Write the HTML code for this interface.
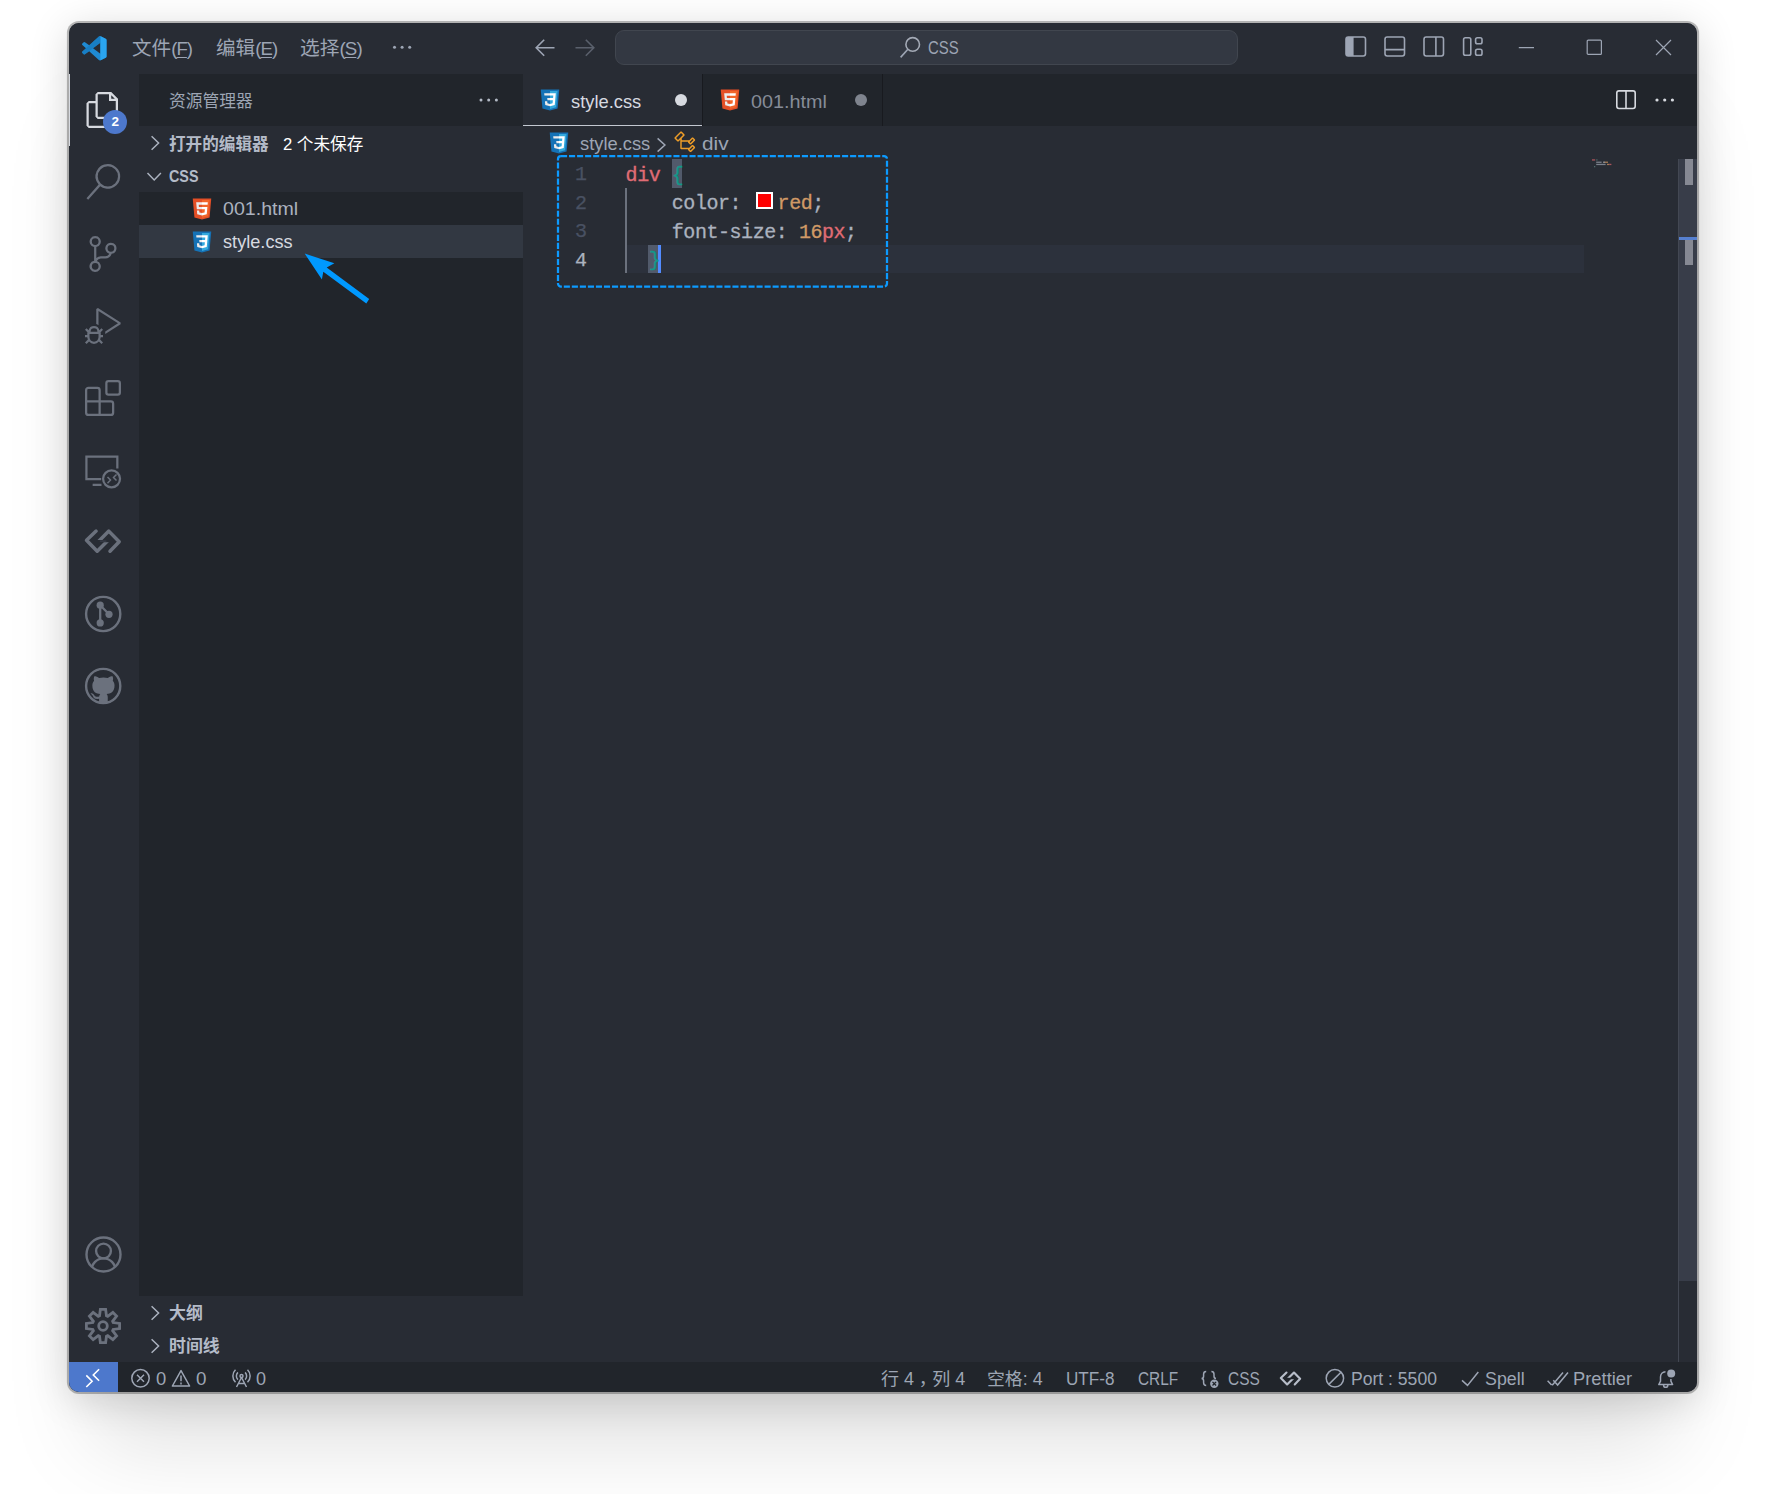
<!DOCTYPE html>
<html lang="zh-CN"><head><meta charset="utf-8"><title>style.css - CSS - Visual Studio Code</title>
<style>
html,body{margin:0;padding:0;background:#fff}
body{width:1768px;height:1494px;position:relative;overflow:hidden;font-family:"Liberation Sans","Noto Sans CJK SC",sans-serif}
.shadow{position:absolute;left:69px;top:23.2px;width:1628px;height:1368.5px;border-radius:10px;
 box-shadow:0 0 0 2.1px rgba(0,0,0,.26),0 6px 40px rgba(0,0,0,.16),0 76px 84px -25px rgba(0,0,0,.125)}
.win{position:absolute;left:69px;top:23.2px;width:1628px;height:1368.5px;border-radius:10px;overflow:hidden;background:#282c34}
.stage{position:absolute;left:-69px;top:-23.2px;width:1768px;height:1494px}
.frame{display:none}
.a{position:absolute}
.t{position:absolute;white-space:nowrap;transform-origin:0 50%;display:block}
.la{font-size:18.5px;letter-spacing:-.9px}
.t u{text-decoration-thickness:1px;text-underline-offset:2px}
svg{position:absolute;overflow:visible}
.code{position:absolute;white-space:pre;font-family:"Liberation Mono","DejaVu Sans Mono",monospace;font-size:20px;letter-spacing:-.45px;height:28.5px;line-height:28.5px;margin-top:2.6px;-webkit-text-stroke:.3px;color:#abb2bf}
.ln{position:absolute;font-family:"Liberation Mono","DejaVu Sans Mono",monospace;font-size:20px;letter-spacing:-.45px;height:28.5px;line-height:28.5px;margin-top:2.4px;-webkit-text-stroke:.25px;width:40px;text-align:right;color:#495162}
</style></head>
<body>
<div class="shadow"></div>

<div class="win"><div class="stage">
<!-- ===== panels / backgrounds ===== -->
<div class="a" style="left:67px;top:21px;width:1632px;height:53px;background:#282c34"></div>
<div class="a" style="left:67px;top:74px;width:72px;height:1288px;background:#282c34"></div>
<div class="a" style="left:139px;top:74px;width:384px;height:1288px;background:#21252b"></div>
<div class="a" style="left:523px;top:74px;width:1176px;height:52px;background:#21252b"></div>
<div class="a" style="left:523px;top:126px;width:1176px;height:1236px;background:#282c34"></div>
<div class="a" style="left:67px;top:1362px;width:1632px;height:33px;background:#21252b"></div>
<!-- ===== title bar ===== -->
<svg style="left:82px;top:35.5px" width="24.5" height="24.5" viewBox="0 0 24 24">
 <path fill="#1f8ad2" d="M23.15 2.587L18.21.21a1.494 1.494 0 0 0-1.705.29l-9.46 8.63-4.12-3.128a.999.999 0 0 0-1.276.057L.327 7.261A1 1 0 0 0 .326 8.74L3.899 12 .326 15.26a1 1 0 0 0 .001 1.479L1.65 17.94a.999.999 0 0 0 1.276.057l4.12-3.128 9.46 8.63a1.492 1.492 0 0 0 1.704.29l4.942-2.377A1.5 1.5 0 0 0 24 20.06V3.939a1.5 1.5 0 0 0-.85-1.352zm-5.146 14.861L10.826 12l7.178-5.448v10.896z"/>
 <path fill="#2aa5f0" d="M18 .3c.07-.03.14-.06.21-.09l4.94 2.377A1.5 1.5 0 0 1 24 3.939V20.06a1.5 1.5 0 0 1-.848 1.352L18.21 23.79c-.07.03-.14.05-.21.07V.3z"/>
 <path fill="#1274b8" d="M1.65 17.94a.999.999 0 0 0 1.276.057L18 6.55V.3a1.49 1.49 0 0 0-1.495.2L.326 15.26a1 1 0 0 0 .001 1.479L1.65 17.94z" opacity=".55"/>
</svg>
<svg style="left:390px;top:40px" width="24" height="14"><g fill="#9da5b4"><circle cx="4.5" cy="7.2" r="1.5"/><circle cx="12.1" cy="7.2" r="1.5"/><circle cx="19.7" cy="7.2" r="1.5"/></g></svg>
<!-- nav arrows -->
<svg style="left:534px;top:37px" width="22" height="22" viewBox="0 0 22 22"><path d="M20.5 10.8H2.6M10.2 2.8L2.2 10.8l8 8" fill="none" stroke="#9da5b4" stroke-width="1.6"/></svg>
<svg style="left:573.5px;top:37px" width="22" height="22" viewBox="0 0 22 22"><path d="M1.5 10.8H19.4M11.8 2.8l8 8-8 8" fill="none" stroke="#5a606c" stroke-width="1.6"/></svg>
<!-- command center -->
<div class="a" style="left:615px;top:30.1px;width:623px;height:34.8px;box-sizing:border-box;border:1px solid #41464f;border-radius:9px;background:#333842"></div>
<svg style="left:899px;top:37px" width="22" height="22" viewBox="0 0 22 22"><circle cx="13.7" cy="7.4" r="6.8" fill="none" stroke="#a3a9b5" stroke-width="1.6"/><path d="M8.9 12.2L1.6 20.4" stroke="#9da5b4" stroke-width="1.6" fill="none"/></svg>
<!-- layout controls -->
<svg style="left:1344.5px;top:35.9px" width="22" height="22" viewBox="0 0 22 22"><rect x="1" y="1" width="19.5" height="19" rx="2.2" fill="none" stroke="#9da5b4" stroke-width="1.6"/><path d="M1 3.2a2.2 2.2 0 0 1 2.2-2.2H8.6v19H3.2A2.2 2.2 0 0 1 1 17.8z" fill="#9da5b4"/></svg>
<svg style="left:1383.5px;top:35.9px" width="22" height="22" viewBox="0 0 22 22"><rect x="1" y="1" width="19.5" height="19" rx="2.2" fill="none" stroke="#9da5b4" stroke-width="1.6"/><path d="M1 13.6H20.5" stroke="#9da5b4" stroke-width="1.6"/></svg>
<svg style="left:1422.5px;top:35.9px" width="22" height="22" viewBox="0 0 22 22"><rect x="1" y="1" width="19.5" height="19" rx="2.2" fill="none" stroke="#9da5b4" stroke-width="1.6"/><path d="M12.9 1V20" stroke="#9da5b4" stroke-width="1.6"/></svg>
<svg style="left:1462px;top:35.9px" width="22" height="22" viewBox="0 0 22 22"><g fill="none" stroke="#9da5b4" stroke-width="1.6"><rect x="1.6" y="1.8" width="7.2" height="17.4" rx="1.8"/><rect x="13.6" y="1.8" width="6.4" height="6" rx="1.8"/><rect x="13.6" y="13.2" width="6.4" height="6" rx="1.8"/></g></svg>
<!-- window controls -->
<svg style="left:1518px;top:40px" width="18" height="16"><path d="M0.8 7.6H16" stroke="#9da5b4" stroke-width="1.2"/></svg>
<svg style="left:1586px;top:38.8px" width="18" height="18"><rect x="1.2" y="1.2" width="14.2" height="14.2" rx="1" fill="none" stroke="#9da5b4" stroke-width="1.2"/></svg>
<svg style="left:1655px;top:38.9px" width="18" height="18"><path d="M1 1L16 16M16 1L1 16" stroke="#9da5b4" stroke-width="1.2"/></svg>
<!-- ===== activity bar ===== -->
<div class="a" style="left:67px;top:74px;width:3.3px;height:72px;background:#d7dae0"></div>
<svg style="left:85.2px;top:91.7px" width="36" height="36" viewBox="0 0 24 24"><path fill="#d7dae0" d="M17.5 0h-9L7 1.5V6H2.5L1 7.5v15.07L2.5 24h12.07L16 22.57V18h4.7l1.3-1.43V4.5L17.5 0zm0 2.12l2.38 2.38H17.5V2.12zm-3 20.38h-12v-15H7v9.07L8.5 18h6v4.5zm6-6h-12v-15H16V6h4.5v10.5z"/></svg>
<div class="a" style="left:103.2px;top:109.8px;width:24px;height:24px;border-radius:12px;background:#4d78cc"></div>
<span class="t" id="badge" style="left:103.2px;top:109.8px;width:24px;height:24px;line-height:24.5px;text-align:center;font-size:13.5px;font-weight:700;color:#fff">2</span>
<svg style="left:85.2px;top:163.7px" width="36" height="36" viewBox="0 0 24 24"><path fill="#6b717d" d="M15.25 0a8.25 8.25 0 0 0-6.18 13.72L1 22.88l1.12 1 8.05-9.12A8.251 8.251 0 1 0 15.25.01V0zm0 15a6.75 6.75 0 1 1 0-13.5 6.75 6.75 0 0 1 0 13.5z"/></svg>
<svg style="left:85.2px;top:235.7px" width="36" height="36" viewBox="0 0 24 24"><path fill="#6b717d" d="M21.007 8.222A3.738 3.738 0 0 0 15.045 5.2a3.737 3.737 0 0 0 1.156 6.583 2.988 2.988 0 0 1-2.668 1.67h-2.99a4.456 4.456 0 0 0-2.989 1.165V7.4a3.737 3.737 0 1 0-1.494 0v9.117a3.776 3.776 0 1 0 1.816.099 2.99 2.99 0 0 1 2.668-1.667h2.99a4.484 4.484 0 0 0 4.223-3.039 3.736 3.736 0 0 0 3.25-3.687zM4.565 3.738a2.242 2.242 0 1 1 4.484 0 2.242 2.242 0 0 1-4.484 0zm4.484 16.441a2.242 2.242 0 1 1-4.484 0 2.242 2.242 0 0 1 4.484 0zm8.221-9.715a2.242 2.242 0 1 1 0-4.485 2.242 2.242 0 0 1 0 4.485z"/></svg>
<svg style="left:85.2px;top:307.7px" width="36" height="36" viewBox="0 0 24 24"><path fill="#6b717d" d="M10.94 13.5l-1.32 1.32a3.73 3.73 0 0 0-7.24 0L1.06 13.5 0 14.56l1.72 1.72-.22.22V18H0v1.5h1.5v.08c.077.489.214.966.41 1.42L0 22.94 1.06 24l1.65-1.65A4.308 4.308 0 0 0 6 24a4.31 4.31 0 0 0 3.29-1.65L10.94 24 12 22.94 10.09 21c.198-.464.336-.951.41-1.45v-.1H12V18h-1.5v-1.5l-.22-.22L12 14.56l-1.06-1.06zM6 13.5a2.25 2.25 0 0 1 2.25 2.25h-4.5A2.25 2.25 0 0 1 6 13.5zm3 6a3.33 3.33 0 0 1-3 3 3.33 3.33 0 0 1-3-3v-2.25h6v2.25zm14.76-9.9v1.26L13.5 17.37V15.6l8.5-5.37L9 2v9.46a5.07 5.07 0 0 0-1.5-.72V.63L8.64 0l15.12 9.6z"/></svg>
<svg style="left:85.2px;top:379.7px" width="36" height="36" viewBox="0 0 24 24"><g fill="none" stroke="#6b717d" stroke-width="1.5" stroke-linejoin="round"><rect x="14.25" y=".75" width="9" height="9" rx="1.4"/><path d="M2.25 5.25H8.25a1.5 1.5 0 0 1 1.5 1.5V14.25H17.25a1.5 1.5 0 0 1 1.5 1.5V21.75a1.5 1.5 0 0 1-1.5 1.5H2.25a1.5 1.5 0 0 1-1.5-1.5V6.75a1.5 1.5 0 0 1 1.5-1.5zM.75 14.25H9.75V23.25"/></g></svg>
<svg style="left:85.2px;top:451.7px" width="36" height="36" viewBox="0 0 24 24"><g fill="none" stroke="#6b717d"><path stroke-width="1.5" d="M21.55 11V3.15H.95V18.15H10.8M5.1 21.9H11"/><circle cx="17.7" cy="17.9" r="5.65" stroke-width="1.5"/><path stroke-width="1" d="M15 16.6l2 2.1-2 2.1M21 15l-2 2 2 2"/></g></svg>
<svg style="left:0;top:0" width="1768" height="700"><defs><clipPath id="cl1"><path d="M80 520H98.6V542.3H125V560H80z"/></clipPath><clipPath id="cl2"><path d="M125 560H107.6V539.9H80V520H125z"/></clipPath></defs>
<g fill="none" stroke="#6b717d" stroke-width="3.5" stroke-linecap="round" stroke-linejoin="round"><path clip-path="url(#cl1)" d="M96.1 531.1L86.5 540.3 97.2 551.2 109 539.4"/><path clip-path="url(#cl2)" d="M110 551.2L119.2 541.8 108.8 531.1 97 542.9"/></g><rect x="99.8" y="540.5" width="6.6" height="1.3" fill="#3a3f4a"/></svg>
<svg style="left:0;top:0" width="200" height="800"><g stroke="#6b717d" fill="none"><circle cx="103.2" cy="614.0" r="17.1" stroke-width="2.4"/><path stroke-width="2.3" d="M100.2 605.2V622.9M100.2 605.2L109 614.3"/></g><g fill="#6b717d"><circle cx="100.2" cy="605.2" r="3.6"/><circle cx="109" cy="614.3" r="3.6"/><circle cx="100.2" cy="622.9" r="3.6"/></g></svg>
<svg style="left:85.8px;top:668.6px" width="34.8" height="34.8" viewBox="0 0 16 16"><path fill="#6b717d" fill-rule="evenodd" d="M8 .2a7.8 7.8 0 1 0 0 15.6A7.8 7.8 0 1 0 8 .2zM8 0C3.58 0 0 3.58 0 8c0 3.54 2.29 6.53 5.47 7.59.4.07.55-.17.55-.38 0-.19-.01-.82-.01-1.49-2.01.37-2.53-.49-2.69-.94-.09-.23-.48-.94-.82-1.13-.28-.15-.68-.52-.01-.53.63-.01 1.08.58 1.23.82.72 1.21 1.87.87 2.33.66.07-.52.28-.87.51-1.07-1.78-.2-3.64-.89-3.64-3.95 0-.87.31-1.59.82-2.15-.08-.2-.36-1.02.08-2.12 0 0 .67-.21 2.2.82.64-.18 1.32-.27 2-.27.68 0 1.36.09 2 .27 1.53-1.04 2.2-.82 2.2-.82.44 1.1.16 1.92.08 2.12.51.56.82 1.27.82 2.15 0 3.07-1.87 3.75-3.65 3.95.29.25.54.73.54 1.48 0 1.07-.01 1.93-.01 2.2 0 .21.15.46.55.38A8.013 8.013 0 0 0 16 8c0-4.42-3.58-8-8-8z"/></svg>
<svg style="left:0;top:0" width="200" height="800"><circle cx="103.2" cy="686.0" r="17.1" fill="none" stroke="#6b717d" stroke-width="2.4"/></svg>
<svg style="left:84.6px;top:1235.5px" width="37" height="37" viewBox="0 0 37 37"><defs><clipPath id="acc"><circle cx="18.5" cy="18.5" r="17"/></clipPath></defs><g fill="none" stroke="#6b717d" stroke-width="2.4"><circle cx="18.5" cy="18.5" r="17"/><circle cx="18.5" cy="15" r="7.4"/><circle clip-path="url(#acc)" cx="18.5" cy="34.4" r="12"/></g></svg>
<svg style="left:84.9px;top:1308px" width="36" height="36" viewBox="0 0 36 36"><g fill="none" stroke="#6b717d" stroke-width="2.8" stroke-linejoin="miter"><path d="M14.52 7.88 L15.37 1.41 L20.63 1.41 L21.48 7.88 L22.69 8.38 L27.87 4.41 L31.59 8.13 L27.62 13.31 L28.12 14.52 L34.59 15.37 L34.59 20.63 L28.12 21.48 L27.62 22.69 L31.59 27.87 L27.87 31.59 L22.69 27.62 L21.48 28.12 L20.63 34.59 L15.37 34.59 L14.52 28.12 L13.31 27.62 L8.13 31.59 L4.41 27.87 L8.38 22.69 L7.88 21.48 L1.41 20.63 L1.41 15.37 L7.88 14.52 L8.38 13.31 L4.41 8.13 L8.13 4.41 L13.31 8.38Z"/><circle cx="18" cy="18" r="4.3"/></g></svg>
<!-- ===== sidebar ===== -->
<div class="a" style="left:139px;top:126px;width:384px;height:66px;background:#282c34"></div>
<div class="a" style="left:139px;top:225px;width:384px;height:33px;background:#323842"></div>
<div class="a" style="left:139px;top:1296px;width:384px;height:66px;background:#282c34"></div>
<svg style="left:476px;top:93px" width="26" height="14"><g fill="#b3bac6"><circle cx="5" cy="7" r="1.5"/><circle cx="12.7" cy="7" r="1.5"/><circle cx="20.4" cy="7" r="1.5"/></g></svg>
<svg style="left:149.6px;top:134px" width="12" height="18"><path d="M1.6 2.2L8.6 9 1.6 15.8" fill="none" stroke="#abb2bf" stroke-width="1.5"/></svg>
<svg style="left:146.3px;top:170.5px" width="18" height="12"><path d="M1.5 2L8.2 9 14.9 2" fill="none" stroke="#abb2bf" stroke-width="1.5"/></svg>
<svg style="left:149.6px;top:1304px" width="12" height="18"><path d="M1.6 2.2L8.6 9 1.6 15.8" fill="none" stroke="#abb2bf" stroke-width="1.5"/></svg>
<svg style="left:149.6px;top:1337px" width="12" height="18"><path d="M1.6 2.2L8.6 9 1.6 15.8" fill="none" stroke="#abb2bf" stroke-width="1.5"/></svg>
<svg style="left:190.2px;top:196.6px" width="24" height="24" viewBox="0 0 32 32"><polygon points="5.902 27.201 3.655 2 28.345 2 26.095 27.197 15.985 30 5.902 27.201" fill="#e44f26"/><polygon points="16 27.858 24.17 25.593 26.092 4.061 16 4.061 16 27.858" fill="#f1662a"/><polygon points="16 13.407 11.91 13.407 11.628 10.242 16 10.242 16 7.151 15.989 7.151 8.25 7.151 8.324 7.981 9.083 16.498 16 16.498 16 13.407" fill="#ebebeb"/><polygon points="16 21.434 15.986 21.438 12.544 20.509 12.324 18.044 10.651 18.044 9.221 18.044 9.654 22.896 15.986 24.654 16 24.65 16 21.434" fill="#ebebeb"/><polygon points="15.989 13.407 15.989 16.498 19.795 16.498 19.437 20.507 15.989 21.437 15.989 24.653 22.326 22.896 22.372 22.374 23.098 14.237 23.174 13.407 22.341 13.407 15.989 13.407" fill="#fff"/><polygon points="15.989 7.151 15.989 9.071 15.989 10.235 15.989 10.242 23.445 10.242 23.445 10.242 23.455 10.242 23.517 9.548 23.658 7.981 23.732 7.151 15.989 7.151" fill="#fff"/></svg>
<svg style="left:190.2px;top:229.6px" width="24" height="24" viewBox="0 0 32 32"><polygon points="5.902 27.201 3.656 2 28.344 2 26.095 27.197 15.985 30 5.902 27.201" fill="#1572b6"/><polygon points="16 27.858 24.17 25.593 26.092 4.061 16 4.061 16 27.858" fill="#33a9dc"/><polygon points="16 13.191 20.09 13.191 20.372 10.026 16 10.026 16 6.935 16.011 6.935 23.75 6.935 23.676 7.764 22.917 16.282 16 16.282 16 13.191" fill="#fff"/><polygon points="16.019 21.218 16.005 21.222 12.563 20.292 12.343 17.827 10.67 17.827 9.24 17.827 9.673 22.68 16.004 24.438 16.019 24.434 16.019 21.218" fill="#ebebeb"/><polygon points="19.827 16.151 19.455 20.29 16.008 21.22 16.008 24.436 22.344 22.68 22.391 22.158 22.928 16.151 19.827 16.151" fill="#fff"/><polygon points="16.011 6.935 16.011 8.855 16.011 10.018 16.011 10.026 8.555 10.026 8.555 10.026 8.545 10.026 8.483 9.331 8.342 7.764 8.268 6.935 16.011 6.935" fill="#ebebeb"/><polygon points="16 13.191 16 15.111 16 16.274 16 16.282 12.611 16.282 12.611 16.282 12.601 16.282 12.539 15.587 12.399 14.02 12.325 13.191 16 13.191" fill="#ebebeb"/></svg>
<!-- ===== editor: tabs ===== -->
<div class="a" style="left:523px;top:74px;width:179px;height:52px;background:#282c34"></div>
<div class="a" style="left:523px;top:124.9px;width:179px;height:1.3px;background:#c3c8d0"></div>
<div class="a" style="left:702px;top:74px;width:1px;height:52px;background:#181a1f"></div>
<div class="a" style="left:882px;top:74px;width:1px;height:52px;background:#181a1f"></div>
<svg style="left:538px;top:87.6px" width="24" height="24" viewBox="0 0 32 32"><polygon points="5.902 27.201 3.656 2 28.344 2 26.095 27.197 15.985 30 5.902 27.201" fill="#1572b6"/><polygon points="16 27.858 24.17 25.593 26.092 4.061 16 4.061 16 27.858" fill="#33a9dc"/><polygon points="16 13.191 20.09 13.191 20.372 10.026 16 10.026 16 6.935 16.011 6.935 23.75 6.935 23.676 7.764 22.917 16.282 16 16.282 16 13.191" fill="#fff"/><polygon points="16.019 21.218 16.005 21.222 12.563 20.292 12.343 17.827 10.67 17.827 9.24 17.827 9.673 22.68 16.004 24.438 16.019 24.434 16.019 21.218" fill="#ebebeb"/><polygon points="19.827 16.151 19.455 20.29 16.008 21.22 16.008 24.436 22.344 22.68 22.391 22.158 22.928 16.151 19.827 16.151" fill="#fff"/><polygon points="16.011 6.935 16.011 8.855 16.011 10.018 16.011 10.026 8.555 10.026 8.555 10.026 8.545 10.026 8.483 9.331 8.342 7.764 8.268 6.935 16.011 6.935" fill="#ebebeb"/><polygon points="16 13.191 16 15.111 16 16.274 16 16.282 12.611 16.282 12.611 16.282 12.601 16.282 12.539 15.587 12.399 14.02 12.325 13.191 16 13.191" fill="#ebebeb"/></svg>
<svg style="left:717.9px;top:87.6px" width="24" height="24" viewBox="0 0 32 32"><polygon points="5.902 27.201 3.655 2 28.345 2 26.095 27.197 15.985 30 5.902 27.201" fill="#e44f26"/><polygon points="16 27.858 24.17 25.593 26.092 4.061 16 4.061 16 27.858" fill="#f1662a"/><polygon points="16 13.407 11.91 13.407 11.628 10.242 16 10.242 16 7.151 15.989 7.151 8.25 7.151 8.324 7.981 9.083 16.498 16 16.498 16 13.407" fill="#ebebeb"/><polygon points="16 21.434 15.986 21.438 12.544 20.509 12.324 18.044 10.651 18.044 9.221 18.044 9.654 22.896 15.986 24.654 16 24.65 16 21.434" fill="#ebebeb"/><polygon points="15.989 13.407 15.989 16.498 19.795 16.498 19.437 20.507 15.989 21.437 15.989 24.653 22.326 22.896 22.372 22.374 23.098 14.237 23.174 13.407 22.341 13.407 15.989 13.407" fill="#fff"/><polygon points="15.989 7.151 15.989 9.071 15.989 10.235 15.989 10.242 23.445 10.242 23.445 10.242 23.455 10.242 23.517 9.548 23.658 7.981 23.732 7.151 15.989 7.151" fill="#fff"/></svg>
<div class="a" style="left:675px;top:94.2px;width:12px;height:12px;border-radius:6px;background:#d7dae0"></div>
<div class="a" style="left:855px;top:94.2px;width:12px;height:12px;border-radius:6px;background:#7f848e"></div>
<svg style="left:1615px;top:88.5px" width="22" height="22"><rect x="1.8" y="1.9" width="18.4" height="17.6" rx="2.2" fill="none" stroke="#d7dae0" stroke-width="1.6"/><path d="M11 1.9V19.5" stroke="#d7dae0" stroke-width="1.6"/></svg>
<svg style="left:1652px;top:93px" width="26" height="14"><g fill="#d7dae0"><circle cx="5" cy="7" r="1.6"/><circle cx="12.7" cy="7" r="1.6"/><circle cx="20.4" cy="7" r="1.6"/></g></svg>
<!-- ===== breadcrumbs ===== -->
<svg style="left:547.1px;top:130.6px" width="24" height="24" viewBox="0 0 32 32"><polygon points="5.902 27.201 3.656 2 28.344 2 26.095 27.197 15.985 30 5.902 27.201" fill="#1572b6"/><polygon points="16 27.858 24.17 25.593 26.092 4.061 16 4.061 16 27.858" fill="#33a9dc"/><polygon points="16 13.191 20.09 13.191 20.372 10.026 16 10.026 16 6.935 16.011 6.935 23.75 6.935 23.676 7.764 22.917 16.282 16 16.282 16 13.191" fill="#fff"/><polygon points="16.019 21.218 16.005 21.222 12.563 20.292 12.343 17.827 10.67 17.827 9.24 17.827 9.673 22.68 16.004 24.438 16.019 24.434 16.019 21.218" fill="#ebebeb"/><polygon points="19.827 16.151 19.455 20.29 16.008 21.22 16.008 24.436 22.344 22.68 22.391 22.158 22.928 16.151 19.827 16.151" fill="#fff"/><polygon points="16.011 6.935 16.011 8.855 16.011 10.018 16.011 10.026 8.555 10.026 8.555 10.026 8.545 10.026 8.483 9.331 8.342 7.764 8.268 6.935 16.011 6.935" fill="#ebebeb"/><polygon points="16 13.191 16 15.111 16 16.274 16 16.282 12.611 16.282 12.611 16.282 12.601 16.282 12.539 15.587 12.399 14.02 12.325 13.191 16 13.191" fill="#ebebeb"/></svg>
<svg style="left:656.4px;top:135.6px" width="12" height="18"><path d="M1.6 2.4L8.9 9 1.6 15.6" fill="none" stroke="#9da5b4" stroke-width="1.5"/></svg>
<svg style="left:673.2px;top:129.8px" width="24" height="24" viewBox="0 0 16 16"><path fill="#ee9d28" d="M11.34 9.71h.71l2.67-2.67v-.71L13.38 5h-.7l-1.82 1.81h-5V5.56l1.86-1.85V3l-2-2H5L1 5v.71l2 2h.71l1.14-1.15v5.79l.5.5H10v.52l1.33 1.34h.71l2.67-2.67v-.71L13.37 10h-.7l-1.86 1.85h-5v-4H10v.48l1.34 1.38zm1.69-3.65l.63.63-2 2-.63-.63 2-2zm0 5l.63.63-2 2-.63-.63 2-2zM3.35 6.65l-1.29-1.3 3.29-3.29 1.3 1.29-3.3 3.3z"/></svg>
<!-- ===== code ===== -->
<div class="a" style="left:627px;top:244.5px;width:957px;height:28.5px;background:#2c313c"></div>
<div class="a" style="left:672px;top:159px;width:10px;height:28.7px;background:#515a6b"></div>
<div class="a" style="left:648px;top:244.7px;width:10px;height:28.3px;background:#515a6b"></div>
<div class="a" style="left:625.1px;top:188px;width:1.6px;height:85px;background:#6b717d"></div>
<div class="a" style="left:657.9px;top:244.7px;width:3.1px;height:28.3px;background:#528bff"></div>
<span class="ln" style="left:546.6px;top:159.0px">1</span>
<span class="ln" style="left:546.6px;top:187.5px">2</span>
<span class="ln" style="left:546.6px;top:216.0px">3</span>
<span class="ln" style="left:546.6px;top:244.5px;color:#abb2bf">4</span>
<span class="code" id="c1_0" style="left:625.60px;top:159.0px"><span style="color:#e06c75">div</span> <span style="color:#12988a">{</span></span>
<span class="code" id="c2_4" style="left:671.80px;top:187.5px">color:</span>
<div class="a" style="left:755.6px;top:192.4px;width:17.4px;height:16.4px;box-sizing:border-box;border:2px solid #fff;background:#ff0000"></div>
<span class="code" id="c2_red" style="left:777.6px;top:187.5px"><span style="color:#d19a66">red</span>;</span>
<span class="code" id="c3_4" style="left:671.80px;top:216.0px">font-size: <span style="color:#d19a66">16</span><span style="color:#e06c75">px</span>;</span>
<span class="code" id="c4_2" style="left:648.70px;top:244.5px"><span style="color:#12988a">}</span></span>
<svg style="left:0;top:0" width="1768" height="200"><rect x="1592" y="159.3" width="3.2" height="1.3" fill="#a8545c"/><rect x="1596.4" y="159.3" width="1" height="1.3" fill="#5b7d7a"/><rect x="1596.2" y="161.6" width="5.4" height="1.3" fill="#7b808b"/><rect x="1603.4" y="161.6" width="1.3" height="1.2" fill="#ddd"/><rect x="1604.8" y="161.6" width="3.2" height="1.3" fill="#a27a55"/><rect x="1596.2" y="163.8" width="9.4" height="1.3" fill="#7b808b"/><rect x="1607" y="163.8" width="2.2" height="1.3" fill="#a27a55"/><rect x="1609.2" y="163.8" width="2.2" height="1.3" fill="#a8545c"/><rect x="1594.2" y="166" width="1" height="1.3" fill="#5b7d7a"/></svg>
<div class="a" style="left:1678px;top:159px;width:21px;height:1121.6px;background:#383d49"></div>
<div class="a" style="left:1678px;top:159px;width:1px;height:1203px;background:#434853"></div>
<div class="a" style="left:1685px;top:159px;width:8px;height:26px;background:#868993"></div>
<div class="a" style="left:1685px;top:238px;width:8px;height:27px;background:#868993"></div>
<div class="a" style="left:1679px;top:237px;width:20px;height:3px;background:#5680d0"></div>
<!-- ===== status bar ===== -->
<div class="a" style="left:67px;top:1362px;width:51px;height:33px;background:#4d78cc"></div>
<svg style="left:0;top:1362px" width="1768" height="33" viewBox="0 1362 1768 33"><g fill="none" stroke="#fff" stroke-width="1.6"><path d="M86.3 1375.4l5.8 5.8-5.8 5.8M99.1 1369.2l-5.8 5.8 5.8 5.8"/></g><g fill="none" stroke="#9da5b4" stroke-width="1.5"><circle cx="140.5" cy="1378.3" r="8.7"/><path d="M137 1374.8l7 7M144 1374.8l-7 7"/><path d="M181 1370.6L172.4 1386h17.2z" stroke-linejoin="round"/><path d="M181 1375.6v5.6M181 1382.6v1.8"/><path d="M241.5 1377.5l-5 9.5M241.5 1377.5l5 9.5M238.3 1383.6h6.4"/><circle cx="241.5" cy="1376" r="1.5"/><path d="M237.9 1372.4a5 5 0 0 0 0 7.2M245.1 1372.4a5 5 0 0 1 0 7.2M235.5 1369.8a8.6 8.6 0 0 0 0 12.4M247.5 1369.8a8.6 8.6 0 0 1 0 12.4"/><path d="M1206.2 1371.6c-2.4 0-2.6.9-2.6 2.6v2c0 1.4-.6 2.2-2 2.3 1.4.1 2 .9 2 2.300v2c0 1.7.2 2.600 2.600 2.600M1211.400 1371.600c2.400 0 2.600.9 2.600 2.600v2c0 1.400.6 2.200 2 2.300"/><circle cx="1334.9" cy="1378.300" r="8.700"/><path d="M1328.800 1384.400l12.200-12.200"/><path d="M1462 1380.400l5.500 5 10.800-13.400"/><path d="M1547.600 1380.800l4 4.200M1553.300 1380.300l4.300 4.700 10.400-12.600M1552.200 1385.300l10.800-12.900"/><path d="M1665.500 1371.700a5.300 5.300 0 0 0-5 5.300v4.200l-1.700 3.400h13.800l-1.700-3.400v-2.200M1663.600 1385.200a2.100 2.100 0 0 0 4.200 0" stroke-linejoin="round"/></g><circle cx="1214.300" cy="1383.700" r="4.200" fill="#9da5b4"/><path d="M1212.500 1381.900l3.600 3.600M1216.100 1381.900l-3.600 3.600" stroke="#21252b" stroke-width="1.300"/><circle cx="1671.200" cy="1373.400" r="4" fill="#9da5b4"/></svg>
<svg style="left:0;top:0" width="1768" height="1494"><g transform="translate(1290.5 1378.500) scale(.59) translate(-102.900 -541.200)" fill="none" stroke="#b7bdc9" stroke-width="3.700" stroke-linecap="round" stroke-linejoin="round"><path clip-path="url(#cl1)" d="M96.1 531.1L86.5 540.3 97.2 551.2 109 539.4"/><path clip-path="url(#cl2)" d="M110 551.2L119.2 541.8 108.800 531.100 97 542.900"/></g></svg>

<!-- text -->
<span class="t" id="m1" style="left:131.5px;top:32.5px;height:30px;line-height:30px;font-size:19.5px;color:#9da5b4;transform:scaleX(1.0033);">文件<span class="la">(<u>F</u>)</span></span>
<span class="t" id="m2" style="left:215.5px;top:32.5px;height:30px;line-height:30px;font-size:19.5px;color:#9da5b4;transform:scaleX(1.0033);">编辑<span class="la">(<u>E</u>)</span></span>
<span class="t" id="m3" style="left:300.0px;top:32.5px;height:30px;line-height:30px;font-size:19.5px;color:#9da5b4;transform:scaleX(1.0115);">选择<span class="la">(<u>S</u>)</span></span>
<span class="t" id="cc" style="left:927.7px;top:32.5px;height:30px;line-height:30px;font-size:17.5px;color:#9da5b4;transform:scaleX(0.8528);">CSS</span>
<span class="t" id="sbt" style="left:169.1px;top:86.0px;height:30px;line-height:30px;font-size:16.5px;color:#9da5b4;transform:scaleX(1.0133);">资源管理器</span>
<span class="t" id="h1" style="left:169.1px;top:128.5px;height:30px;line-height:30px;font-size:16.5px;color:#b4bbc8;transform:scaleX(1.0061);font-weight:700">打开的编辑器</span>
<span class="t" id="h1b" style="left:283.3px;top:128.5px;height:30px;line-height:30px;font-size:16.5px;color:#ffffff;transform:scaleX(1.0075);">2 个未保存</span>
<span class="t" id="h2" style="left:169.1px;top:161.0px;height:30px;line-height:30px;font-size:16.5px;color:#b4bbc8;transform:scaleX(0.8702);font-weight:700">CSS</span>
<span class="t" id="f1" style="left:222.9px;top:193.5px;height:30px;line-height:30px;font-size:18.5px;color:#abb2bf;transform:scaleX(1.0592);">001.html</span>
<span class="t" id="f2" style="left:222.9px;top:226.5px;height:30px;line-height:30px;font-size:18.5px;color:#d7dae0;transform:scaleX(0.9817);">style.css</span>
<span class="t" id="h3" style="left:169.0px;top:1298.0px;height:30px;line-height:30px;font-size:16.5px;color:#b4bbc8;transform:scaleX(1.0273);font-weight:700">大纲</span>
<span class="t" id="h4" style="left:169.0px;top:1331.0px;height:30px;line-height:30px;font-size:16.5px;color:#b4bbc8;transform:scaleX(1.0242);font-weight:700">时间线</span>
<span class="t" id="t1" style="left:570.8px;top:86.5px;height:30px;line-height:30px;font-size:18.5px;color:#d7dae0;transform:scaleX(0.9901);">style.css</span>
<span class="t" id="t2" style="left:750.5px;top:86.5px;height:30px;line-height:30px;font-size:18.5px;color:#868c98;transform:scaleX(1.0704);">001.html</span>
<span class="t" id="b1" style="left:579.8px;top:129.0px;height:30px;line-height:30px;font-size:18.5px;color:#9da5b4;transform:scaleX(0.9901);">style.css</span>
<span class="t" id="b2" style="left:701.5px;top:129.0px;height:30px;line-height:30px;font-size:18.5px;color:#9da5b4;transform:scaleX(1.1224);">div</span>
<span class="t" id="s1" style="left:155.5px;top:1363.5px;height:30px;line-height:30px;font-size:17.5px;color:#9da5b4;transform:scaleX(1.0515);">0</span>
<span class="t" id="s2" style="left:196.3px;top:1363.5px;height:30px;line-height:30px;font-size:17.5px;color:#9da5b4;transform:scaleX(1.0722);">0</span>
<span class="t" id="s3" style="left:256.3px;top:1363.5px;height:30px;line-height:30px;font-size:17.5px;color:#9da5b4;transform:scaleX(1.0309);">0</span>
<span class="t" id="s4" style="left:880.5px;top:1363.5px;height:30px;line-height:30px;font-size:17.5px;color:#9da5b4;transform:scaleX(1.0306);">行 4<span style="position:relative;left:4.5px">，</span>列 4</span>
<span class="t" id="s5" style="left:987.1px;top:1363.5px;height:30px;line-height:30px;font-size:17.5px;color:#9da5b4;transform:scaleX(1.0202);">空格: 4</span>
<span class="t" id="s6" style="left:1066.0px;top:1363.5px;height:30px;line-height:30px;font-size:17.5px;color:#9da5b4;transform:scaleX(0.9778);">UTF-8</span>
<span class="t" id="s7" style="left:1137.5px;top:1363.5px;height:30px;line-height:30px;font-size:17.5px;color:#9da5b4;transform:scaleX(0.8796);">CRLF</span>
<span class="t" id="s8" style="left:1227.5px;top:1363.5px;height:30px;line-height:30px;font-size:17.5px;color:#9da5b4;transform:scaleX(0.8833);">CSS</span>
<span class="t" id="s9" style="left:1350.5px;top:1363.5px;height:30px;line-height:30px;font-size:17.5px;color:#9da5b4;transform:scaleX(1.0035);">Port : 5500</span>
<span class="t" id="s10" style="left:1484.5px;top:1363.5px;height:30px;line-height:30px;font-size:17.5px;color:#9da5b4;transform:scaleX(1.0180);">Spell</span>
<span class="t" id="s11" style="left:1573.0px;top:1363.5px;height:30px;line-height:30px;font-size:17.5px;color:#9da5b4;transform:scaleX(1.0479);">Prettier</span>
<!-- ===== annotations ===== -->
<svg style="left:0;top:0" width="1768" height="400"><rect x="558" y="156" width="329" height="130.6" rx="3" fill="none" stroke="#0c9aff" stroke-width="2.25" stroke-dasharray="6.1 1.93"/><path d="M304.7 253.600L334.4 263.300 326.700 267.400 369.200 299.100 366.300 303.400 323.300 271.700 321.900 279.600z" fill="#0099ff"/></svg>

</div><div class="frame"></div></div>
</body></html>
